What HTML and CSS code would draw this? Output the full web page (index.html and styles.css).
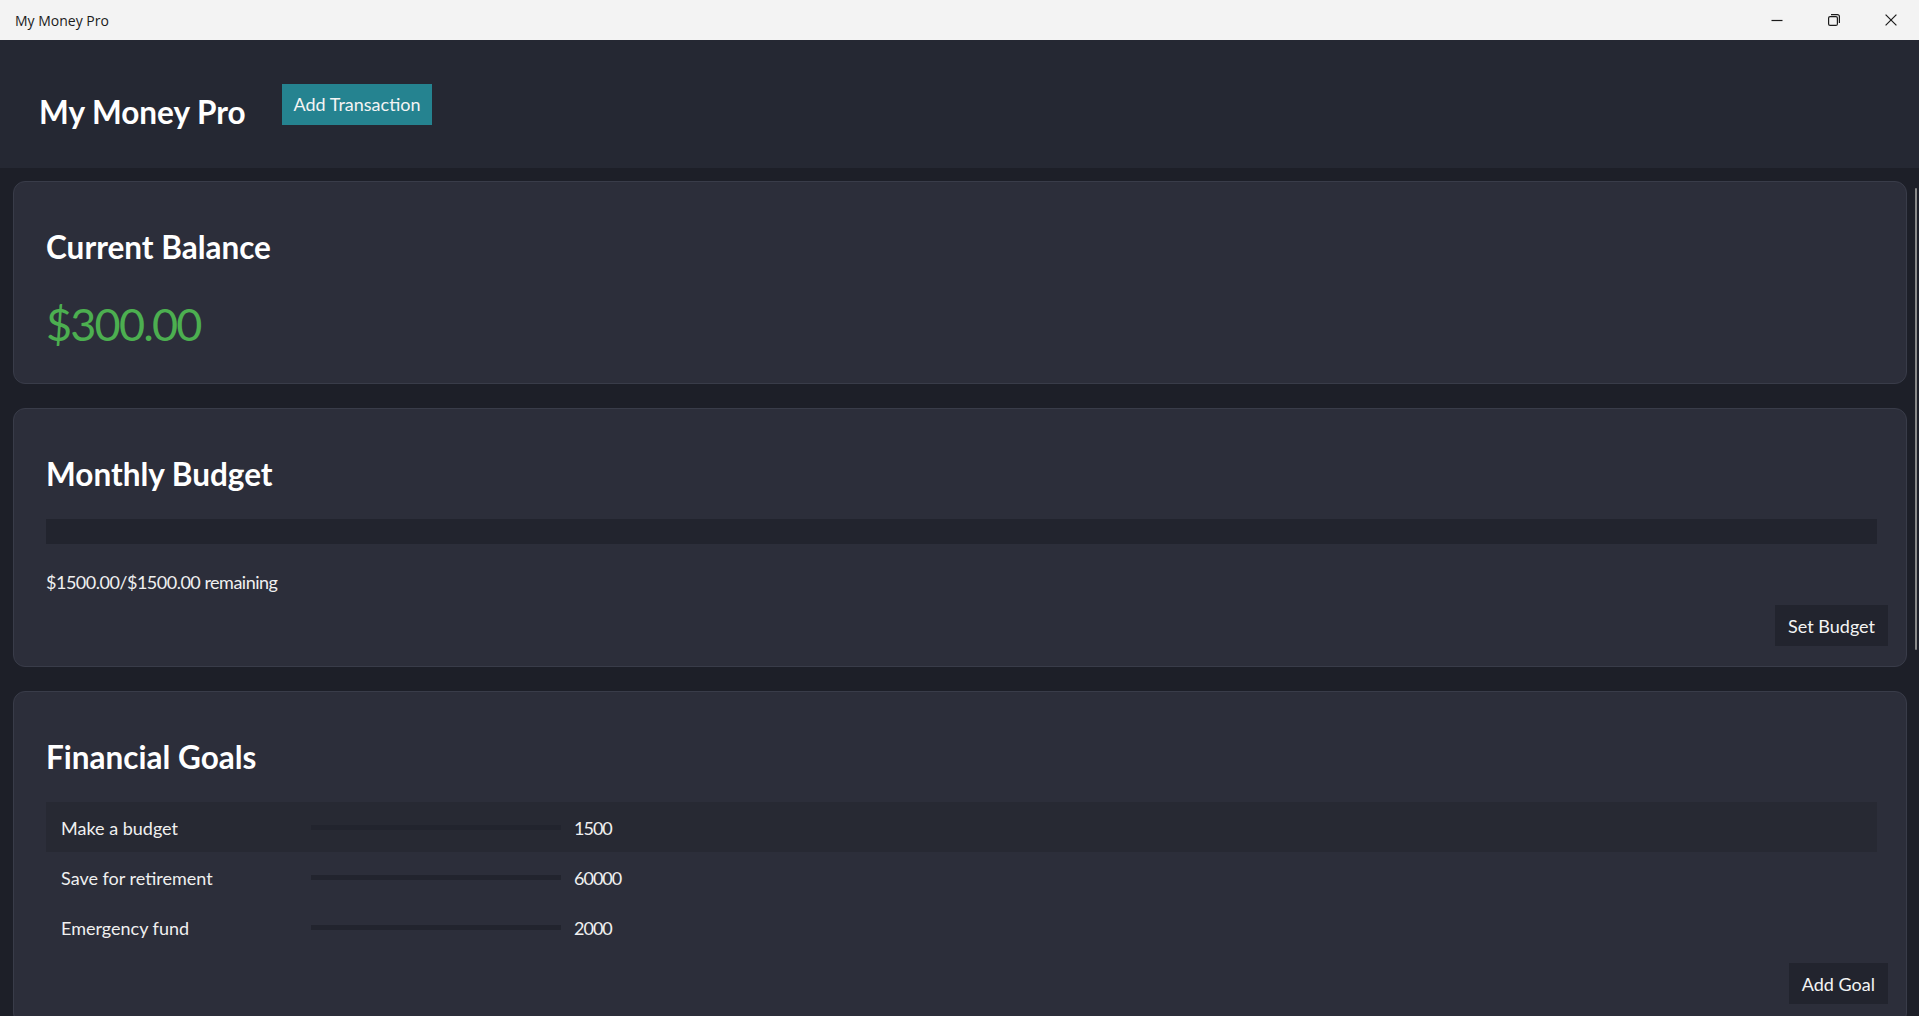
FILE: index.html
```html
<!DOCTYPE html>
<html lang="en">
<head>
<meta charset="utf-8">
<title>My Money Pro</title>
<link rel="stylesheet" href="styles.css">
</head>
<body>
<div class="titlebar">
  <span class="titlebar-title">My Money Pro</span>
  <div class="win-controls">
    <span class="win-btn">
      <svg width="12" height="12" viewBox="0 0 12 12"><path d="M0.5 6.5h11" stroke="#1b1b1b" stroke-width="1.2" fill="none"/></svg>
    </span>
    <span class="win-btn">
      <svg width="12" height="12" viewBox="0 0 12 12"><rect x="0.6" y="2.6" width="8.8" height="8.8" rx="1.5" stroke="#1b1b1b" stroke-width="1.2" fill="none"/><path d="M3 0.6h6.4a2 2 0 0 1 2 2V9" stroke="#1b1b1b" stroke-width="1.2" fill="none"/></svg>
    </span>
    <span class="win-btn">
      <svg width="12" height="12" viewBox="0 0 12 12"><path d="M0.6 0.6L11.4 11.4M11.4 0.6L0.6 11.4" stroke="#1b1b1b" stroke-width="1.2" fill="none"/></svg>
    </span>
  </div>
</div>

<header class="app-header">
  <h1 class="app-title">My Money Pro</h1>
  <button class="btn btn-primary">Add Transaction</button>
</header>

<main class="content">
  <section class="card card-balance">
    <h2 class="card-title">Current Balance</h2>
    <p class="balance">$300.00</p>
  </section>

  <section class="card">
    <h2 class="card-title">Monthly Budget</h2>
    <div class="budget-bar"><div class="budget-fill" style="width:0%"></div></div>
    <p class="budget-text">$1500.00/$1500.00 remaining</p>
    <div class="card-actions"><button class="btn btn-dark">Set Budget</button></div>
  </section>

  <section class="card">
    <h2 class="card-title">Financial Goals</h2>
    <ul class="goals">
      <li class="goal goal-active"><span class="goal-name">Make a budget</span><span class="goal-bar"></span><span class="goal-amount">1500</span></li>
      <li class="goal"><span class="goal-name">Save for retirement</span><span class="goal-bar"></span><span class="goal-amount">60000</span></li>
      <li class="goal"><span class="goal-name">Emergency fund</span><span class="goal-bar"></span><span class="goal-amount">2000</span></li>
    </ul>
    <div class="card-actions"><button class="btn btn-dark">Add Goal</button></div>
  </section>
</main>

<div class="scroll-thumb"></div>
</body>
</html>
```

FILE: styles.css
```css
* { box-sizing: border-box; }

html, body {
  margin: 0;
  height: 100%;
  overflow: hidden;
}

body {
  background: #1d1f28;
  font-family: Lato, "Open Sans", sans-serif;
  color: #f0f0f0;
  display: flex;
  flex-direction: column;
  position: relative;
}

.titlebar {
  height: 40px;
  flex: none;
  background: #f3f3f3;
  display: flex;
  align-items: center;
  justify-content: space-between;
  padding-left: 15px;
}

.titlebar-title {
  font-family: "Open Sans", sans-serif;
  font-size: 14px;
  color: #1b1b1b;
}

.win-controls {
  display: flex;
  height: 100%;
}

.win-btn {
  width: 57px;
  height: 40px;
  display: flex;
  align-items: center;
  justify-content: center;
}

.app-header {
  height: 128px;
  flex: none;
  background: #252833;
  display: flex;
  align-items: center;
  padding: 0 39px;
}

.app-title {
  margin: 15px 36px 0 0;
  font-size: 31.5px;
  font-weight: 700;
  color: #ffffff;
  line-height: 40px;
}

.btn {
  font-family: inherit;
  font-size: 18px;
  color: #f4f4f4;
  border: none;
  height: 41px;
  padding: 0 13px;
  cursor: pointer;
}

.btn-primary {
  background: #258390;
  padding: 0 12px;
}

.btn-dark {
  background: #22242e;
}

.content {
  flex: 1;
  min-height: 0;
  overflow: hidden;
  padding: 13px 12px 12px 13px;
  display: flex;
  flex-direction: column;
  gap: 24px;
}

.card {
  flex: none;
  background: #2c2e3a;
  border: 1px solid #393c49;
  border-radius: 12px;
  padding: 20px 29px 20px 32px;
}

.card-title {
  margin: 25px 0 25px;
  font-size: 31.5px;
  line-height: 40px;
  font-weight: 700;
  color: #ffffff;
}

.balance {
  margin: 0 0 9px;
  padding-top: 2px;
  font-size: 45px;
  line-height: 60px;
  letter-spacing: -1.8px;
  color: #4caf50;
}

.budget-bar {
  height: 25px;
  background: #22242e;
}

.budget-fill {
  height: 100%;
  background: #4caf50;
}

.budget-text {
  margin: 26px 0 0;
  font-size: 18px;
  line-height: 24px;
  letter-spacing: -0.5px;
}

.card-actions {
  display: flex;
  justify-content: flex-end;
  margin: 11px -11px 0 0;
}

.goals {
  list-style: none;
  margin: 0;
  padding: 0;
}

.goal {
  height: 50px;
  display: flex;
  align-items: center;
  padding: 2px 0 0 15px;
  font-size: 18px;
}

.goal-active {
  background: #272933;
}

.goal-name {
  width: 250px;
}

.goal-bar {
  width: 250px;
  height: 5px;
  background: #22242e;
  margin: -2px 13px 0 0;
}

.goal-amount {
  letter-spacing: -1px;
}

.scroll-thumb {
  position: absolute;
  right: 2px;
  top: 188px;
  width: 2px;
  height: 462px;
  border-radius: 1px;
  background: #8a8a8a;
}
```
